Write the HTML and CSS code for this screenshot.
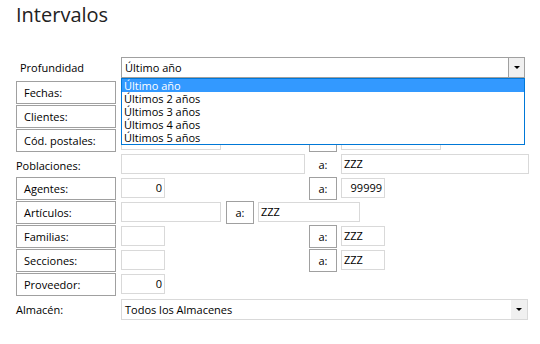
FILE: index.html
```html
<!DOCTYPE html>
<html lang="es">
<head>
    <meta charset="UTF-8">
    <title>Intervalos</title>
    <link rel="stylesheet" href="styles.css">
</head>
<body>
    <h1 class="title">Intervalos</h1>

    <div class="form">
        <!-- Profundidad, with its list open -->
        <div class="row">
            <div class="label label-indent">Profundidad</div>
            <div class="select select-open">
                <div class="select-text">Último año</div>
                <div class="select-arrow"><span class="caret"></span></div>
                <div class="dropdown">
                    <div class="dropdown-item selected">Último año</div>
                    <div class="dropdown-item">Últimos 2 años</div>
                    <div class="dropdown-item">Últimos 3 años</div>
                    <div class="dropdown-item">Últimos 4 años</div>
                    <div class="dropdown-item">Últimos 5 años</div>
                </div>
            </div>
        </div>

        <div class="row">
            <div class="btn-label">Fechas:</div>
            <div class="input w100"></div>
            <div class="btn-a gap-100"></div>
            <div class="input w100"></div>
        </div>

        <div class="row">
            <div class="btn-label">Clientes:</div>
            <div class="input w100"></div>
            <div class="btn-a gap-100"></div>
            <div class="input w100"></div>
        </div>

        <div class="row">
            <div class="btn-label">Cód. postales:</div>
            <div class="input w100"></div>
            <div class="btn-a gap-100"></div>
            <div class="input w100"></div>
        </div>

        <div class="row">
            <div class="label label-low">Poblaciones:</div>
            <div class="input w184"></div>
            <div class="text-a">a:</div>
            <div class="input w188">ZZZ</div>
        </div>

        <div class="row">
            <div class="btn-label">Agentes:</div>
            <div class="input w44 num">0</div>
            <div class="btn-a gap-44">a:</div>
            <div class="input w44 num">99999</div>
        </div>

        <div class="row">
            <div class="btn-label">Artículos:</div>
            <div class="input w100"></div>
            <div class="btn-a gap-small">a:</div>
            <div class="input w102">ZZZ</div>
        </div>

        <div class="row">
            <div class="btn-label">Familias:</div>
            <div class="input w44"></div>
            <div class="btn-a gap-44">a:</div>
            <div class="input w44">ZZZ</div>
        </div>

        <div class="row">
            <div class="btn-label">Secciones:</div>
            <div class="input w44"></div>
            <div class="btn-a gap-44">a:</div>
            <div class="input w44">ZZZ</div>
        </div>

        <div class="row">
            <div class="btn-label">Proveedor:</div>
            <div class="input w44 num">0</div>
        </div>

        <div class="row">
            <div class="label label-low">Almacén:</div>
            <div class="select select-light">
                <div class="select-text">Todos los Almacenes</div>
                <div class="select-arrow"><span class="caret"></span></div>
            </div>
        </div>
    </div>
</body>
</html>
```

FILE: styles.css
```css
body {
    margin: 0;
    font-family: "Open Sans", "Noto Sans", sans-serif;
    font-size: 11px;
    color: #000;
    background-color: #fff;
}
.title {
    margin: 2px 0 0 16px;
    font-size: 20px;
    font-weight: 400;
    line-height: 26px;
    color: #222;
}
.form {
    margin-top: 28px;
    padding-left: 16px;
}
.row {
    display: flex;
    align-items: flex-start;
    height: 24px;
}
.label {
    width: 100px;
    margin-right: 5px;
    line-height: 24px;
}
.label-indent {
    box-sizing: border-box;
    padding-left: 4px;
}
.label-low {
    padding-top: 2px;
}
.btn-label {
    box-sizing: border-box;
    width: 100px;
    height: 23px;
    margin-top: 1px;
    margin-right: 5px;
    padding-left: 7px;
    border: 1px solid #a0a0a0;
    line-height: 21px;
    white-space: nowrap;
}
.btn-a,
.text-a {
    box-sizing: border-box;
    width: 28px;
    height: 23px;
    margin-top: 1px;
    margin-right: 4px;
    text-align: center;
    line-height: 21px;
    border: 1px solid #a0a0a0;
}
.text-a {
    border-color: transparent;
    margin-left: 4px;
}
.gap-100 {
    margin-left: 88px;
}
.gap-44 {
    margin-left: 144px;
}
.gap-small {
    margin-left: 5px;
}
.input {
    box-sizing: border-box;
    height: 20px;
    margin-top: 2px;
    padding: 0 2px;
    border: 1px solid #d9d9d9;
    line-height: 18px;
    white-space: nowrap;
}
.num {
    text-align: right;
}
.w44 { width: 44px; }
.w100 { width: 100px; }
.w102 { width: 102px; }
.w184 { width: 184px; }
.w188 { width: 188px; }

/* combo boxes */
.select {
    position: relative;
    box-sizing: border-box;
    display: flex;
    height: 21px;
    margin-top: 1px;
    border: 1px solid #a0a0a0;
    background-color: #fff;
}
.select-open {
    width: 404px;
    z-index: 2;
}
.select-light {
    width: 407px;
    margin-top: 3px;
    border-color: #d9d9d9;
}
.select-text {
    flex: 1;
    padding-left: 3px;
    line-height: 19px;
    white-space: nowrap;
}
.select-arrow {
    display: flex;
    align-items: center;
    justify-content: center;
    width: 15px;
    background-color: #f0f0f0;
    border-left: 1px solid #a0a0a0;
}
.select-light .select-arrow {
    width: 16px;
    border-left: none;
}
.caret {
    width: 0;
    height: 0;
    border-left: 3px solid transparent;
    border-right: 3px solid transparent;
    border-top: 3px solid #000;
}
.dropdown {
    position: absolute;
    top: 20px;
    left: -1px;
    right: -1px;
    border: 1px solid #0078d7;
    background-color: #fff;
}
.dropdown-item {
    height: 13px;
    padding-left: 2px;
    line-height: 13px;
    white-space: nowrap;
}
.dropdown-item.selected {
    background-color: #3399ff;
    color: #fff;
}
```
